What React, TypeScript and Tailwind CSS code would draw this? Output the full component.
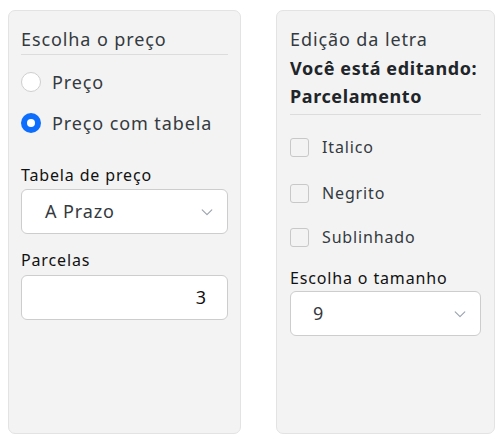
import React from "react";

function Chevron() {
  return (
    <svg width="14" height="14" viewBox="0 0 16 16" fill="none" stroke="#9ca3af" strokeWidth="1.3" strokeLinecap="round" strokeLinejoin="round">
      <path d="M2.5 5.5 8 11l5.5-5.5" />
    </svg>
  );
}

export default function App() {
  return (
    <div
      className="w-[504px] h-[443px] bg-white flex gap-[35px] pl-[8px] pt-[10px] text-[#212529]"
      style={{ fontFamily: '"Noto Sans", sans-serif' }}
    >
      <div className="w-[233px] h-[424px] bg-[#f3f3f3] border border-[#e3e3e3] rounded-[7px] px-[12px] pt-[15px]">
        <div className="text-[18px] tracking-[0.9px] leading-[26px] text-[#343a40] pb-[2px] border-b border-[#dcdcdc]">Escolha o preço</div>
        <div className="flex items-center gap-[11px] mt-[13px] h-[28px]">
          <div className="w-[20px] h-[20px] rounded-full border-[1.5px] border-[#cfcfcf] bg-white" />
          <span className="text-[18px] tracking-[0.9px] text-[#343a40]">Preço</span>
        </div>
        <div className="flex items-center gap-[11px] mt-[13px] h-[28px]">
          <div className="w-[20px] h-[20px] rounded-full bg-[#0d6efd] flex items-center justify-center">
            <div className="w-[8px] h-[8px] rounded-full bg-white" />
          </div>
          <span className="text-[18px] tracking-[0.9px] text-[#343a40]">Preço com tabela</span>
        </div>
        <div className="mt-[27px] text-[16px] tracking-[0.85px] leading-[22px] text-[#111]">Tabela de preço</div>
        <div className="mt-[3px] h-[45px] bg-white border border-[#cdcdcd] rounded-[6px] flex items-center justify-between pl-[23px] pr-[13px]">
          <span className="text-[18px] tracking-[0.9px] text-[#343a40]">A Prazo</span>
          <Chevron />
        </div>
        <div className="mt-[15px] text-[16px] tracking-[0.85px] leading-[22px] text-[#111]">Parcelas</div>
        <div className="mt-[4px] h-[45px] bg-white border border-[#cdcdcd] rounded-[6px] flex items-center justify-end pr-[21px]">
          <span className="text-[18px] text-[#111]">3</span>
        </div>
      </div>
      <div className="w-[219px] h-[424px] bg-[#f3f3f3] border border-[#e3e3e3] rounded-[7px] px-[13px] pt-[15px]">
        <div className="text-[18px] tracking-[0.9px] leading-[26px] text-[#343a40]">Edição da letra</div>
        <div className="text-[18px] tracking-[0.6px] leading-[28px] font-bold text-[#212529] mt-[2px]">Você está editando:</div>
        <div className="text-[18px] tracking-[0.6px] leading-[29px] font-bold text-[#212529] pb-[3px] border-b border-[#dcdcdc]">Parcelamento</div>
        {["Italico", "Negrito", "Sublinhado"].map((t, i) => (
          <div key={t} className={`flex items-center gap-[13px] h-[24px] ${i === 0 ? "mt-[20px]" : i === 1 ? "mt-[22px]" : "mt-[20px]"}`}>
            <div className="w-[19px] h-[19px] rounded-[3px] border-[1.5px] border-[#c8c8c8] bg-[#f3f3f3]" />
            <span className="text-[16px] tracking-[0.85px] text-[#343a40]">{t}</span>
          </div>
        ))}
        <div className="mt-[18px] text-[16px] tracking-[0.85px] leading-[22px] text-[#111]">Escolha o tamanho</div>
        <div className="mt-[2px] h-[45px] bg-white border border-[#cdcdcd] rounded-[6px] flex items-center justify-between pl-[22px] pr-[13px]">
          <span className="text-[18px] text-[#343a40]">9</span>
          <Chevron />
        </div>
      </div>
    </div>
  );
}
